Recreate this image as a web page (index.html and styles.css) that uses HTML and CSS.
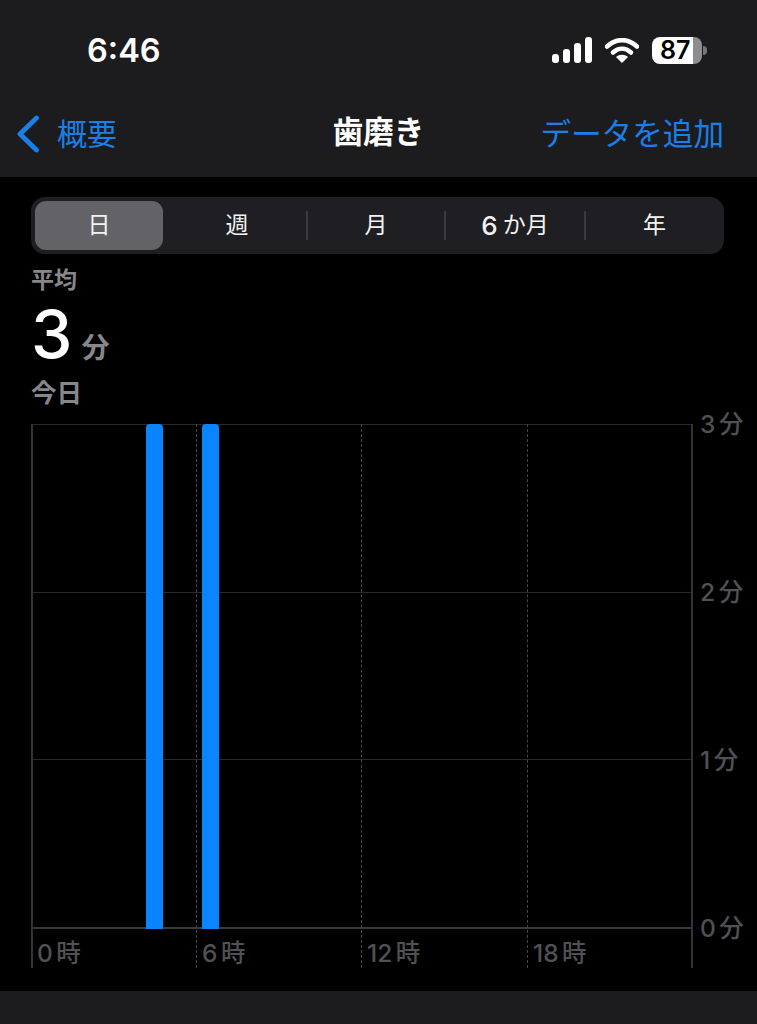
FILE: index.html
```html
<!DOCTYPE html>
<html lang="ja">
<head>
<meta charset="utf-8">
<title>歯磨き</title>
<link rel="stylesheet" href="styles.css">
</head>
<body>
<div class="screen">
  <header class="top">
    <div class="status">
      <span class="time">6:46</span>
      <div class="status-icons">
        <svg class="signal" width="40" height="26" viewBox="0 0 40 26"><rect x="0" y="17" width="7" height="9" rx="3" fill="#fff"/><rect x="11" y="12" width="7" height="14" rx="3" fill="#fff"/><rect x="22" y="6" width="7" height="20" rx="3" fill="#fff"/><rect x="33" y="0" width="7" height="26" rx="3" fill="#fff"/></svg>
        <svg class="wifi" width="34" height="25" viewBox="0 0 34 25"><path d="M2 8.500C11 0 23 0 32 8.500" fill="none" stroke="#fff" stroke-width="4.600" stroke-linecap="round"/><path d="M8 14.500C13.500 9.500 20.500 9.500 26 14.500" fill="none" stroke="#fff" stroke-width="4.600" stroke-linecap="round"/><path d="M17 25L11 19C14.500 16 19.500 16 23 19Z" fill="#fff"/></svg>
        <div class="battery"><span class="battery-body">87</span><span class="battery-tip"></span></div>
      </div>
    </div>
    <nav class="nav">
      <a class="back">
        <svg width="24" height="38" viewBox="0 0 24 38"><path d="M20.500 3L4 19L20.500 35" fill="none" stroke="#1a7fe6" stroke-width="4.800" stroke-linecap="round" stroke-linejoin="round"/></svg>
        <span>概要</span>
      </a>
      <h1 class="title">歯磨き</h1>
      <a class="add">データを追加</a>
    </nav>
  </header>

  <main class="content">
    <div class="segments">
      <div class="seg seg-active">日</div>
      <div class="seg">週</div>
      <div class="seg seg-line">月</div>
      <div class="seg seg-line seg-half"><b>6</b>か月</div>
      <div class="seg seg-line">年</div>
    </div>
    <div class="label-avg">平均</div>
    <div class="value"><span class="num">3</span><span class="unit">分</span></div>
    <div class="label-today">今日</div>

    <div class="chart">
      <div class="plot">
        <div class="plot-rows">
          <div class="hrow"></div>
          <div class="hrow"></div>
          <div class="hrow"></div>
        </div>
        <div class="xaxis">
          <div class="tick">0 時</div>
          <div class="tick tick-dash">6 時</div>
          <div class="tick tick-dash">12 時</div>
          <div class="tick tick-dash">18 時</div>
        </div>
        <div class="dash dash-a"></div>
        <div class="dash dash-b"></div>
        <div class="dash dash-c"></div>
        <div class="bar bar-a"></div>
        <div class="bar bar-b"></div>
      </div>
      <div class="yaxis">
        <span>3 分</span>
        <span>2 分</span>
        <span>1 分</span>
        <span>0 分</span>
      </div>
    </div>
  </main>

  <footer class="bottom"></footer>
</div>
</body>
</html>
```
FILE: styles.css
```css
* { box-sizing: border-box; }
html, body { margin: 0; padding: 0; background: #000; }
body {
  font-family: "Inter", "Noto Sans CJK JP", sans-serif;
  color: #fff;
}
.screen {
  width: 757px;
  height: 1024px;
  display: flex;
  flex-direction: column;
  overflow: hidden;
  background: #000;
}

/* header */
.top {
  height: 177px;
  flex: none;
  background: #1c1c1e;
  display: flex;
  flex-direction: column;
}
.status {
  height: 99px;
  flex: none;
  padding: 37px 0 0 87px;
  display: flex;
  justify-content: space-between;
  align-items: flex-start;
}
.time {
  font-size: 32.500px;
  font-weight: 600;
  line-height: 28px;
}
.status-icons {
  display: flex;
  align-items: flex-start;
  padding-right: 50px;
}
.signal { display: block; margin-right: 13px; }
.wifi { display: block; margin-top: 1px; margin-right: 13px; }
.battery { display: flex; align-items: center; }
.battery-body {
  width: 50px;
  height: 27px;
  border-radius: 8px;
  background: linear-gradient(90deg, #fff 0, #fff 41px, #8e8e90 41px, #8e8e90 100%);
  color: #000;
  font-size: 25px;
  font-weight: 600;
  line-height: 27px;
  padding-left: 8px;
}
.battery-tip {
  width: 4px;
  height: 9px;
  margin-left: 1px;
  border-radius: 0 4px 4px 0;
  background: #77777a;
}
.nav {
  position: relative;
  height: 70px;
  flex: none;
  display: flex;
  justify-content: space-between;
  align-items: center;
  padding: 0 33px 4px 18px;
  font-size: 30px;
  color: #1a7fe6;
}
.back { display: flex; align-items: center; gap: 17px; }
.back svg { display: block; margin-left: -2px; margin-top: 3px; }
.title {
  position: absolute;
  left: 0;
  right: 0;
  top: 13px;
  margin: 0;
  text-align: center;
  font-size: 30.500px;
  line-height: 40px;
  font-weight: 700;
  color: #fff;
}
.add { font-size: 30.600px; }

/* content */
.content {
  flex: 1;
  padding: 20px 33px 0 31px;
  display: flex;
  flex-direction: column;
  align-items: flex-start;
}
.segments {
  width: 693px;
  height: 57px;
  border-radius: 14px;
  background: #1f1f23;
  display: grid;
  grid-template-columns: 136px 140px 138px 140px 139px;
  padding: 4px 0;
  font-size: 23px;
}
.seg {
  display: flex;
  align-items: center;
  justify-content: center;
  position: relative;
  color: #f2f2f2;
  line-height: 49px;
}
.seg b { font-weight: 500; margin-right: 5px; font-size: 26px; }
.seg-active {
  margin-left: 4px;
  width: 128px;
  background: #636367;
  border-radius: 11px;
}
.seg-line::before {
  content: "";
  position: absolute;
  left: -1px;
  top: 10px;
  bottom: 10px;
  width: 2px;
  background: #3b3b3f;
}
.label-avg {
  margin-top: 11px;
  font-size: 23px;
  line-height: 30px;
  font-weight: 700;
  color: #87878b;
}
.value {
  display: flex;
  align-items: baseline;
  height: 70px;
  line-height: 70px;
  margin-top: 4px;
}
.num {
  font-size: 66px;
  font-weight: 500;
  color: #fff;
}
.unit {
  font-size: 28px;
  font-weight: 700;
  color: #87878b;
  margin-left: 9px;
}
.label-today {
  font-size: 25.500px;
  line-height: 30px;
  font-weight: 700;
  color: #87878b;
  margin-top: 9px;
}

/* chart */
.chart {
  display: flex;
  margin-top: 16px;
  height: 544px;
}
.plot {
  position: relative;
  width: 662px;
  height: 544px;
  display: flex;
  flex-direction: column;
  border-left: 2px solid #333336;
  border-right: 2px solid #333336;
}
.plot-rows {
  height: 505px;
  flex: none;
  display: flex;
  flex-direction: column;
  border-bottom: 2px solid #3a3a3d;
}
.hrow {
  flex: 1;
  border-top: 1px solid #2b2b2e;
}
.xaxis {
  height: 39px;
  flex: none;
  display: grid;
  grid-template-columns: 165px 165px 166px 1fr;
  font-size: 24.500px;
  font-weight: 500;
  color: #515155;
  line-height: 48px;
}
.tick { padding-left: 4px; white-space: nowrap; word-spacing: -3px; }
.dash {
  position: absolute;
  top: 0;
  bottom: 0;
  width: 0;
  border-left: 1px dashed #47474a;
}
.dash-a { left: 163px; }
.dash-b { left: 328px; }
.dash-c { left: 494px; }
.bar {
  position: absolute;
  top: 0;
  height: 505px;
  width: 17px;
  background: #0a84ff;
  border-radius: 4px 4px 0 0;
}
.bar-a { left: 113px; }
.bar-b { left: 169px; }
.yaxis {
  width: 62px;
  height: 529px;
  margin-top: -12px;
  padding-left: 7px;
  display: flex;
  flex-direction: column;
  justify-content: space-between;
  font-size: 24.500px;
  font-weight: 500;
  line-height: 25px;
  color: #515155;
  word-spacing: -3px;
  white-space: nowrap;
}
.bottom {
  height: 33px;
  flex: none;
  background: #1c1c1e;
}
```
